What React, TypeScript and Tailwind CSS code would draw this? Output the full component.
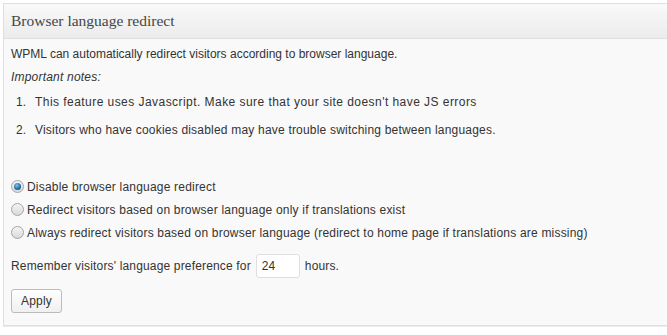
export default function App() {
  const options = [
    "Disable browser language redirect",
    "Redirect visitors based on browser language only if translations exist",
    "Always redirect visitors based on browser language (redirect to home page if translations are missing)",
  ]

  return (
    <div className="h-[335px] w-[667px] bg-white pl-[3px] pt-[3px] font-['Liberation_Sans',Arial,sans-serif] text-[12px] text-[#333]">
      <div className="border-l border-t border-[#dfdfdf] bg-[#f9f9f9] shadow-[0_1px_0_#dfdfdf,0_2px_0_#ececec]">
        <div className="flex h-[35px] items-center border-b border-[#dfdfdf] bg-gradient-to-b from-[#f9f9f9] to-[#ececec] pl-[7px]">
          <h3 className="font-['Liberation_Serif',Georgia,serif] text-[15.5px] text-[#464646]">Browser language redirect</h3>
        </div>
        <div className="px-[7px] pb-[12px] pt-[4px] tracking-[0.2px]">
          <p className="leading-[22px] tracking-normal">WPML can automatically redirect visitors according to browser language.</p>
          <p className="mt-[1px] leading-[22px] italic">Important notes:</p>
          <ol className="ml-[5px]">
            <li className="flex leading-[28px] tracking-[0.45px]"><span className="w-[19px] tracking-normal">1.</span>This feature uses Javascript. Make sure that your site doesn't have JS errors</li>
            <li className="flex leading-[28px]"><span className="w-[19px] tracking-normal">2.</span>Visitors who have cookies disabled may have trouble switching between languages.</li>
          </ol>
          <div className="mt-[31px] flex flex-col">
            {options.map((o, i) => (
              <label key={i} className="flex h-[23px] items-center gap-[3px]">
                <span className="flex h-[13px] w-[13px] items-center justify-center rounded-full border border-[#a5a5a5] bg-gradient-to-b from-[#f4f4f4] to-[#d9d9d9]">
                  {i === 0 && <span className="h-[7px] w-[7px] rounded-full bg-[radial-gradient(circle_at_40%_35%,#7fc5f2,#1c6ba6_60%,#0b3f6a)]" />}
                </span>
                {o}
              </label>
            ))}
          </div>
          <div className="mt-[10px] flex items-center tracking-[0.16px]">
            Remember visitors' language preference for
            <input
              defaultValue="24"
              className="mx-[5px] h-[24px] w-[44px] rounded-[3px] border border-[#dfdfdf] bg-white px-[5px] text-[12px] tracking-normal text-[#333] outline-none"
            />
            hours.
          </div>
          <button className="mt-[11px] h-[24px] w-[51px] rounded-[3px] border border-[#bbb] bg-gradient-to-b from-[#fefefe] to-[#f0f0f0] text-[12px] text-[#333]">
            Apply
          </button>
        </div>
      </div>
    </div>
  )
}
